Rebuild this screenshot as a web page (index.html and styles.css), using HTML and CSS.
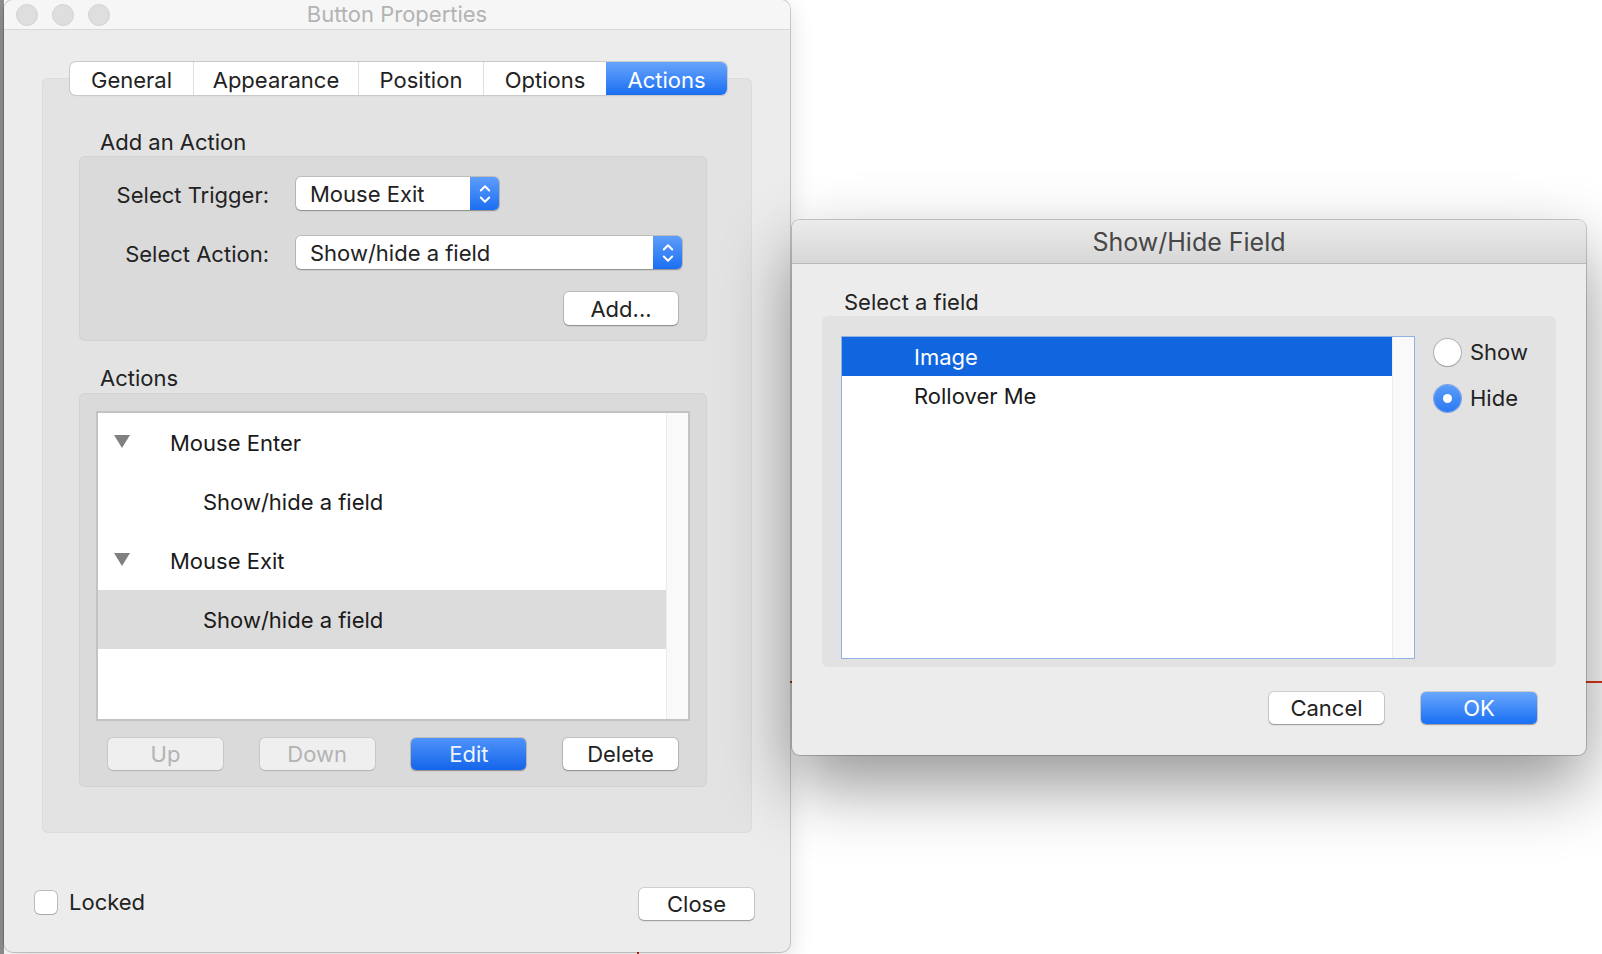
FILE: index.html
```html
<!DOCTYPE html>
<html lang="en">
<head>
  <meta charset="UTF-8">
  <title>Button Properties</title>
  <link rel="stylesheet" href="styles.css">
</head>
<body>
  <div class="desk-line"></div>
  <div class="desk-tick"></div>

  <div class="window props">
    <div class="title-bar">
      <div class="lights"><span></span><span></span><span></span></div>
      <div class="title">Button Properties</div>
      <div></div>
    </div>
    <div class="win-body">
      <div class="tabs">
        <div class="tab t-general">General</div>
        <div class="tab t-appearance">Appearance</div>
        <div class="tab t-position">Position</div>
        <div class="tab t-options">Options</div>
        <div class="tab t-actions active">Actions</div>
      </div>

      <div class="tab-panel">
        <div class="section-label">Add an Action</div>
        <div class="group add-group">
          <div class="form-row">
            <label>Select Trigger:</label>
            <div class="popup trigger">
              <span class="popup-text">Mouse Exit</span>
              <span class="stepper">
                <svg width="12" height="22" viewBox="0 0 12 22"><path d="M1.8 7.5 L6 3.3 L10.2 7.5 M1.8 14.5 L6 18.7 L10.2 14.5" fill="none" stroke="#fff" stroke-width="2" stroke-linecap="round" stroke-linejoin="round"/></svg>
              </span>
            </div>
          </div>
          <div class="form-row second">
            <label>Select Action:</label>
            <div class="popup action">
              <span class="popup-text">Show/hide a field</span>
              <span class="stepper">
                <svg width="12" height="22" viewBox="0 0 12 22"><path d="M1.8 7.5 L6 3.3 L10.2 7.5 M1.8 14.5 L6 18.7 L10.2 14.5" fill="none" stroke="#fff" stroke-width="2" stroke-linecap="round" stroke-linejoin="round"/></svg>
              </span>
            </div>
          </div>
          <div class="add-row">
            <button class="btn add">Add...</button>
          </div>
        </div>

        <div class="section-label spaced">Actions</div>
        <div class="group actions-group">
          <div class="list">
            <div class="list-rows">
              <div class="row parent"><span class="tri"></span>Mouse Enter</div>
              <div class="row child">Show/hide a field</div>
              <div class="row parent"><span class="tri"></span>Mouse Exit</div>
              <div class="row child selected">Show/hide a field</div>
            </div>
            <div class="scroll-track"></div>
          </div>
          <div class="btn-row">
            <button class="btn disabled">Up</button>
            <button class="btn disabled">Down</button>
            <button class="btn primary">Edit</button>
            <button class="btn">Delete</button>
          </div>
        </div>
      </div>

      <div class="footer">
        <label class="check"><span class="box"></span>Locked</label>
        <button class="btn close">Close</button>
      </div>
    </div>
  </div>

  <div class="window dialog">
    <div class="d-title">Show/Hide Field</div>
    <div class="d-body">
      <div class="d-label">Select a field</div>
      <div class="d-group">
        <div class="d-list">
          <div class="d-rows">
            <div class="d-row selected">Image</div>
            <div class="d-row">Rollover Me</div>
          </div>
          <div class="scroll-track"></div>
        </div>
        <div class="radios">
          <div class="radio"><span class="dot"></span>Show</div>
          <div class="radio on"><span class="dot"></span>Hide</div>
        </div>
      </div>
      <div class="d-buttons">
        <button class="btn">Cancel</button>
        <button class="btn ok">OK</button>
      </div>
    </div>
  </div>
</body>
</html>
```

FILE: styles.css
```css
* {
  box-sizing: border-box;
}
html, body {
  margin: 0;
}
body {
  width: 1602px;
  height: 954px;
  overflow: hidden;
  position: relative;
  font-family: Inter, "Liberation Sans", sans-serif;
  font-size: 22px;
  color: #1f1f1f;
  background: linear-gradient(90deg, #8f8f8f 0 4px, #ffffff 4px);
}

/* desktop bits behind the windows */
.desk-line {
  position: absolute;
  left: 790px;
  top: 681px;
  width: 812px;
  height: 2px;
  background: #d7341c;
}
.desk-tick {
  position: absolute;
  left: 637px;
  top: 951px;
  width: 2px;
  height: 3px;
  background: #c4281a;
}

.window {
  position: absolute;
  background: #ececec;
  display: flex;
  flex-direction: column;
  overflow: hidden;
}

/* Button Properties window */
.props {
  left: 4px;
  top: 0;
  width: 786px;
  height: 952px;
  border-radius: 9px;
  box-shadow: 0 0 0 1px rgba(0,0,0,0.18), 0 8px 24px rgba(0,0,0,0.14);
}
.title-bar {
  height: 30px;
  background: #f6f6f6;
  border-bottom: 1px solid #d9d9d9;
  display: grid;
  grid-template-columns: 1fr auto 1fr;
  align-items: center;
}
.lights {
  display: flex;
  gap: 14px;
  padding-left: 12px;
}
.lights span {
  width: 22px;
  height: 22px;
  border-radius: 50%;
  background: #dedede;
  border: 1px solid #d2d2d2;
}
.title {
  color: #b3b3b3;
  line-height: 29px;
}
.win-body {
  flex: 1;
  display: flex;
  flex-direction: column;
  padding-top: 32px;
}

.tabs {
  display: flex;
  margin-left: 66px;
  align-self: flex-start;
  height: 33px;
  background: #ffffff;
  border-radius: 6px;
  overflow: hidden;
  box-shadow: 0 0 0 1px #c9c9c9, 0 1px 1px rgba(0,0,0,0.18);
  position: relative;
  z-index: 1;
}
.tab {
  padding-top: 4px;
  line-height: 29px;
  text-align: center;
  color: #222;
  border-left: 1px solid #dedede;
}
.t-general { width: 123px; border-left: none; }
.t-appearance { width: 165px; }
.t-position { width: 125px; }
.t-options { width: 123px; }
.t-actions { width: 121px; }
.tab.active {
  border-left: none;
  color: #ffffff;
  background: linear-gradient(#67a4fb, #1a6ff3);
}

.tab-panel {
  margin-top: -17px;
  margin-left: 38px;
  width: 710px;
  height: 755px;
  background: #e3e3e3;
  border-radius: 6px;
  box-shadow: inset 0 0 0 1px #dcdcdc;
  padding: 50px 45px 46px 37px;
}
.section-label {
  line-height: 28px;
  padding-left: 21px;
  color: #222;
}
.section-label.spaced {
  margin-top: 23px;
  margin-bottom: 1px;
}
.group {
  background: #dadada;
  border-radius: 6px;
  box-shadow: inset 0 0 0 1px #d3d3d3;
}

.add-group {
  height: 185px;
  padding: 21px 25px 16px 0;
}
.form-row {
  display: grid;
  grid-template-columns: 190px auto;
  column-gap: 27px;
  align-items: center;
}
.form-row label {
  text-align: right;
  color: #222;
  padding-top: 3px;
}
.form-row.second {
  margin-top: 26px;
}
.popup {
  display: flex;
  height: 33px;
  background: #ffffff;
  border-radius: 5px;
  overflow: hidden;
  box-shadow: 0 0 0 1px rgba(0,0,0,0.12), 0 1px 1.5px rgba(0,0,0,0.28);
}
.popup.trigger { width: 203px; }
.popup.action { width: 386px; }
.popup-text {
  flex: 1;
  padding-left: 14px;
  padding-top: 1px;
  line-height: 32px;
  color: #222;
}
.stepper {
  width: 29px;
  display: flex;
  align-items: center;
  justify-content: center;
  background: linear-gradient(#5e9dfa, #1b6ff3);
}
.add-row {
  margin-top: 23px;
  display: flex;
  justify-content: flex-end;
  padding-right: 4px;
}

.btn {
  font: inherit;
  width: 115px;
  height: 32px;
  padding: 0;
  border: none;
  border-radius: 5px;
  background: #ffffff;
  color: #222;
  box-shadow: 0 0 0 1px rgba(0,0,0,0.12), 0 1px 1.5px rgba(0,0,0,0.28);
}
.btn.add {
  width: 114px;
  height: 33px;
}
.btn.disabled {
  background: #efefef;
  color: #b3b3b3;
  box-shadow: 0 0 0 1px rgba(0,0,0,0.07), 0 1px 1px rgba(0,0,0,0.12);
}
.btn.primary {
  background: linear-gradient(#4f93fa, #1465eb);
  color: #eef4ff;
}

.actions-group {
  height: 394px;
  padding: 18px 17px 17px;
}
.list {
  height: 310px;
  display: flex;
  background: #ffffff;
  border: 2px solid #c3c3c3;
}
.list-rows {
  flex: 1;
}
.row {
  height: 59px;
  display: flex;
  align-items: center;
  color: #1a1a1a;
}
.row.parent {
  padding-left: 16px;
}
.row.child {
  padding-left: 105px;
}
.row.selected {
  background: #dcdcdc;
}
.tri {
  width: 0;
  height: 0;
  border-left: 8.5px solid transparent;
  border-right: 8.5px solid transparent;
  border-top: 13px solid #808080;
  margin-right: 40px;
  margin-top: -2px;
}
.scroll-track {
  width: 22px;
  background: #f9f9f9;
  border-left: 1px solid #ececec;
}
.btn-row {
  margin-top: 17px;
  display: flex;
  justify-content: space-between;
  padding: 0 12px;
}

.footer {
  margin-top: auto;
  padding: 0 36px 32px 31px;
  display: flex;
  justify-content: space-between;
  align-items: center;
}
.check {
  display: flex;
  align-items: center;
  gap: 12px;
  color: #222;
  margin-top: -4px;
}
.check .box {
  width: 22px;
  height: 23px;
  background: #ffffff;
  border-radius: 5px;
  box-shadow: 0 0 0 1px rgba(0,0,0,0.2), 0 1px 1px rgba(0,0,0,0.1);
}

/* Show/Hide Field dialog */
.dialog {
  left: 792px;
  top: 220px;
  width: 794px;
  height: 535px;
  border-radius: 8px;
  box-shadow: 0 0 0 1px rgba(0,0,0,0.2), 0 30px 70px rgba(0,0,0,0.42);
}
.d-title {
  height: 44px;
  padding-top: 2px;
  line-height: 41px;
  text-align: center;
  font-size: 25px;
  color: #474747;
  background: linear-gradient(#ececec, #d6d6d6);
  border-bottom: 1px solid #b9b9b9;
}
.d-body {
  padding: 24px 30px 0;
}
.d-label {
  line-height: 28px;
  padding-left: 22px;
  color: #222;
}
.d-group {
  height: 351px;
  display: flex;
  background: #e2e2e2;
  border-radius: 6px;
  padding: 20px 0 8px 19px;
}
.d-list {
  width: 574px;
  display: flex;
  background: #ffffff;
  border: 1px solid #91b3e4;
}
.d-rows {
  flex: 1;
}
.d-row {
  height: 39px;
  padding-top: 1px;
  line-height: 38px;
  padding-left: 72px;
  color: #1a1a1a;
}
.d-row.selected {
  background: #1166e0;
  color: #ffffff;
}
.radios {
  margin-left: 19px;
  padding-top: 2px;
  display: flex;
  flex-direction: column;
  gap: 18px;
}
.radio {
  display: flex;
  align-items: center;
  gap: 9px;
  height: 28px;
  color: #222;
}
.radio .dot {
  width: 27px;
  height: 27px;
  border-radius: 50%;
  background: #ffffff;
  box-shadow: 0 0 0 1px rgba(0,0,0,0.2), 0 1px 1px rgba(0,0,0,0.15);
  display: flex;
  align-items: center;
  justify-content: center;
}
.radio.on .dot {
  background: linear-gradient(#5a9cf9, #2c79f2);
  box-shadow: 0 0 0 1px rgba(30,100,220,0.5);
}
.radio.on .dot::after {
  content: "";
  width: 9px;
  height: 9px;
  border-radius: 50%;
  background: #ffffff;
}
.d-buttons {
  margin-top: 25px;
  display: flex;
  justify-content: flex-end;
  gap: 37px;
  padding-right: 19px;
}
.btn.ok {
  width: 116px;
  background: linear-gradient(#69a7fc, #1a6ff5);
  color: #ffffff;
}
```
